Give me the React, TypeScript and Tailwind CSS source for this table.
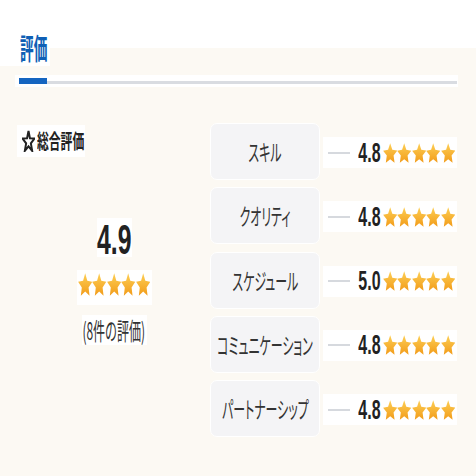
import React, { useId } from "react";

const STAR_PATH =
  "M12 1 L14.7 8.78 L22.94 8.95 L16.37 13.92 L18.76 21.8 L12 17.1 L5.24 21.8 L7.63 13.92 L1.06 8.95 L9.3 8.78 Z";

const FAT_STAR =
  "M12 0.2 L15.5 7.79 L23.79 8.77 L17.66 14.44 L19.29 22.63 L12 18.55 L4.71 22.63 L6.34 14.44 L0.21 8.77 L8.5 7.79 Z";

function Star({ w, h }: { w: number; h: number }) {
  const raw = useId();
  const id = "g" + raw.replace(/[^a-zA-Z0-9]/g, "");
  return (
    <svg
      width={w}
      height={h}
      viewBox="0 0 24 23"
      preserveAspectRatio="none"
      className="block shrink-0"
    >
      <defs>
        <linearGradient id={id} x1="0" y1="0" x2="0" y2="1">
          <stop offset="0" stopColor="#fdcf55" />
          <stop offset="1" stopColor="#f29c1a" />
        </linearGradient>
      </defs>
      <path d={FAT_STAR} fill={`url(#${id})`} />
    </svg>
  );
}

function Stars({ w, h }: { w: number; h: number }) {
  return (
    <div className="flex">
      {[0, 1, 2, 3, 4].map((i) => (
        <Star key={i} w={w} h={h} />
      ))}
    </div>
  );
}

const rows = [
  { label: "スキル", score: "4.8" },
  { label: "クオリティ", score: "4.8" },
  { label: "スケジュール", score: "5.0" },
  { label: "コミュニケーション", score: "4.8" },
  { label: "パートナーシップ", score: "4.8" },
];

export default function App() {
  return (
    <div className="w-[476px] h-[476px] overflow-hidden bg-[#fcf9f3] font-['Noto_Sans_CJK_JP',sans-serif]">
      <div className="flex h-[66px]">
        <div className="w-[50px] bg-white pt-[33px] pl-[20px]">
          <div className="w-[30px] text-[29px] leading-[29px] font-bold text-[#0f5fb5] whitespace-nowrap origin-left scale-x-[0.47]">
            評価
          </div>
        </div>
        <div className="flex-1">
          <div className="h-[48px] bg-white" />
        </div>
      </div>

      <div className="mt-[9px] ml-[15px] w-[443px] bg-white pl-[4px] pr-[1px] py-[3px] flex items-end">
        <div className="w-[28px] h-[6px] bg-[#1565c0]" />
        <div className="flex-1 h-[3px] bg-[#d9dce1]" />
      </div>

      <div className="mt-[36px] flex">
        <div className="w-[192px] ml-[18px] flex flex-col items-center">
          <div className="self-start -ml-[1px] mt-[2px] h-[32px] w-[68px] bg-white flex items-center pl-[5px]">
            <svg
              width="13"
              height="22"
              viewBox="0 0 24 23"
              preserveAspectRatio="none"
              className="block shrink-0"
            >
              <path
                d={STAR_PATH}
                fill="none"
                stroke="#222"
                strokeWidth="2"
                strokeLinejoin="miter"
                vectorEffect="non-scaling-stroke"
              />
            </svg>
            <span className="ml-[2px] w-[47px] whitespace-nowrap text-[20px] leading-none font-bold text-[#222] origin-left scale-x-[0.59]">
              総合評価
            </span>
          </div>

          <div className="mt-[61px] w-[35px] h-[39px] bg-white flex justify-center pt-[4px]">
            <span className="whitespace-nowrap font-['Liberation_Sans',sans-serif] text-[42px] leading-[35px] font-bold text-[#222] scale-x-[0.59]">
              4.9
            </span>
          </div>

          <div className="mt-[13px] w-[75px] h-[35px] bg-white flex justify-center pt-[3px]">
            <Stars w={14.4} h={23} />
          </div>

          <div className="mt-[10px] w-[65px] h-[30px] bg-white flex justify-center items-center">
            <span className="whitespace-nowrap text-[24px] leading-none text-[#333] scale-x-[0.5]">
              (8件の評価)
            </span>
          </div>
        </div>

        <div className="flex flex-col gap-[7.25px]">
          {rows.map((r) => (
            <div key={r.label} className="flex h-[57px] items-center">
              <div className="w-[110px] h-full rounded-[7px] bg-[#f4f4f6] border border-white flex items-center justify-center">
                <span className="whitespace-nowrap text-[23px] leading-none text-[#333] scale-x-[0.52] [font-feature-settings:'palt']">
                  {r.label}
                </span>
              </div>
              <div className="ml-[3px] mt-[2px] w-[134px] h-[31px] bg-white flex items-center pl-[5px]">
                <div className="w-[22px] h-[2px] bg-[#d6d9de]" />
                <div className="ml-[8px] w-[22px] flex justify-center">
                  <span className="whitespace-nowrap font-['Liberation_Sans',sans-serif] text-[28px] leading-none font-bold text-[#222] scale-x-[0.57]">
                    {r.score}
                  </span>
                </div>
                <div className="ml-[3px]">
                  <Stars w={14.4} h={20} />
                </div>
              </div>
            </div>
          ))}
        </div>
      </div>
    </div>
  );
}
